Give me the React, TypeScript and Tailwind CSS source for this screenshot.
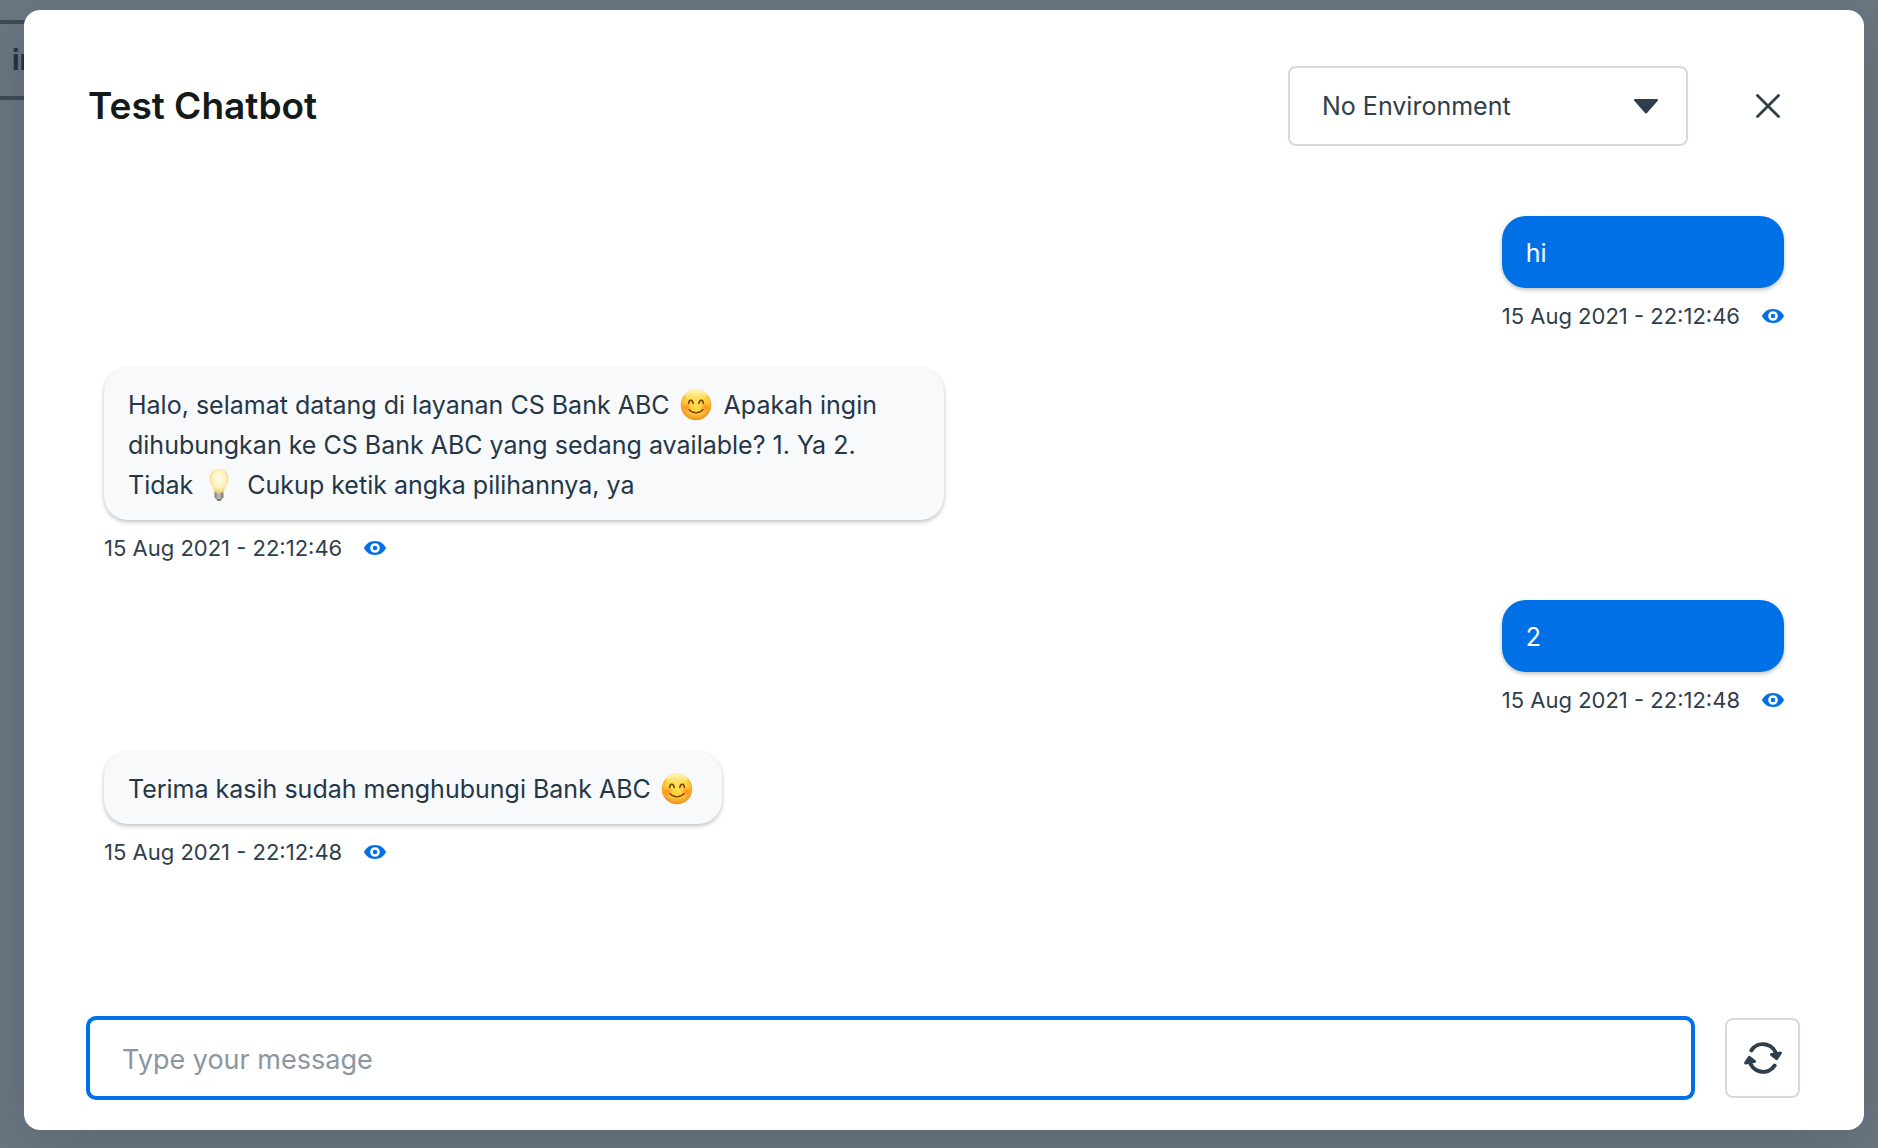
import React, { useState } from "react";

type Part = string | { emoji: "smile" | "bulb" };
type Message = { from: "user" | "bot"; parts: Part[]; time: string };

const messages: Message[] = [
  { from: "user", parts: ["hi"], time: "15 Aug 2021 - 22:12:46" },
  {
    from: "bot",
    parts: [
      "Halo, selamat datang di layanan CS Bank ABC ",
      { emoji: "smile" },
      " Apakah ingin dihubungkan ke CS Bank ABC yang sedang available? 1. Ya 2. Tidak ",
      { emoji: "bulb" },
      " Cukup ketik angka pilihannya, ya",
    ],
    time: "15 Aug 2021 - 22:12:46",
  },
  { from: "user", parts: ["2"], time: "15 Aug 2021 - 22:12:48" },
  {
    from: "bot",
    parts: ["Terima kasih sudah menghubungi Bank ABC ", { emoji: "smile" }],
    time: "15 Aug 2021 - 22:12:48",
  },
];

function Smile() {
  return (
    <svg role="img" aria-label="smiling face" viewBox="0 0 34 34" className="mr-1 ml-0.5 inline-block size-[34px] align-[-8px]">
      <defs>
        <radialGradient id="face" cx="50%" cy="40%" r="58%">
          <stop offset="0" stopColor="#ffe253" />
          <stop offset="0.65" stopColor="#fecb3a" />
          <stop offset="1" stopColor="#ee9220" />
        </radialGradient>
        <radialGradient id="cheek">
          <stop offset="0" stopColor="#ff7a1c" stopOpacity="0.8" />
          <stop offset="1" stopColor="#ff8a1c" stopOpacity="0" />
        </radialGradient>
        <linearGradient id="shine" x1="0" y1="0" x2="0" y2="1">
          <stop offset="0" stopColor="#fffbd0" />
          <stop offset="1" stopColor="#ffe860" stopOpacity="0" />
        </linearGradient>
      </defs>
      <circle cx="17" cy="17" r="15.3" fill="url(#face)" />
      <ellipse cx="17" cy="8" rx="11" ry="6" fill="url(#shine)" />
      <circle cx="7.5" cy="19.5" r="5.5" fill="url(#cheek)" />
      <circle cx="26.5" cy="19.5" r="5.5" fill="url(#cheek)" />
      <g fill="none" stroke="#7a3f08" strokeLinecap="round">
        <path d="M9.6 15.6c.3-4.6 4-4.6 4.6 0M19.8 15.6c.6-4.6 4.3-4.6 4.6 0" strokeWidth="1.5" />
        <path d="M10 21.6c3.6 4.3 10.4 4.3 14 0" strokeWidth="1.4" />
      </g>
    </svg>
  );
}

function Bulb() {
  return (
    <svg role="img" aria-label="light bulb" viewBox="0 0 34 34" className="mr-1 ml-0.5 inline-block size-[34px] align-[-8px]">
      <defs>
        <radialGradient id="glass" cx="50%" cy="42%" r="58%">
          <stop offset="0" stopColor="#fffef2" />
          <stop offset="0.6" stopColor="#fff3bd" />
          <stop offset="1" stopColor="#f0cc66" />
        </radialGradient>
        <linearGradient id="base" x1="0" y1="0" x2="1" y2="0">
          <stop offset="0" stopColor="#77746c" />
          <stop offset="0.45" stopColor="#d8d5cc" />
          <stop offset="1" stopColor="#77746c" />
        </linearGradient>
      </defs>
      <path d="M17 1c-5.6 0-9.5 4.2-9.5 9.5 0 5.5 4.3 8 4.8 14.5h9.4c.5-6.5 4.8-9 4.8-14.5C26.5 5.2 22.6 1 17 1z" fill="url(#glass)" />
      <path d="M12.6 24.6h8.8v5l-1.8 2h-5.2l-1.8-2z" fill="url(#base)" />
      <path d="M12.6 27h8.8M12.8 29.2h8.4" stroke="#8b887f" strokeWidth=".7" />
      <path d="M14.4 31.2h5.2l-1.4 1.6h-2.4z" fill="#444" />
    </svg>
  );
}

function EyeIcon() {
  return (
    <svg viewBox="0 0 22 14" className="h-[14px] w-[22px]" fill="#0070e6" aria-hidden="true">
      <path
        fillRule="evenodd"
        d="M11 0C5.8 0 1.9 2.8 0 7c1.9 4.2 5.8 7 11 7s9.1-2.8 11-7c-1.9-4.2-5.8-7-11-7zm0 2.2a4.8 4.8 0 1 1 0 9.6 4.8 4.8 0 0 1 0-9.6z"
      />
      <circle cx="11" cy="7" r="2.3" />
    </svg>
  );
}

function RefreshIcon() {
  return (
    <svg viewBox="0 0 38 32" className="h-8 w-[38px]" fill="none" stroke="#2f3e4b" strokeLinecap="round" strokeLinejoin="round" aria-hidden="true">
      <path d="M7.4 8.4A13.8 13.8 0 0 1 32.6 14M30.6 23.6A13.8 13.8 0 0 1 5.4 18" strokeWidth="4" />
      <path d="M27.6 12.6l5 3.9 3.6-5.5-3.8 1zM10.4 19.4l-5-3.9-3.6 5.5 3.8-1z" fill="#2f3e4b" strokeWidth="3.2" />
    </svg>
  );
}

function MessageItem({ message }: { message: Message }) {
  const user = message.from === "user";
  return (
    <li className={user ? "flex max-w-[840px] flex-col self-end" : "flex max-w-[840px] flex-col self-start"}>
      <p
        className={
          user
            ? "rounded-3xl bg-[#0070e6] px-6 pt-[17px] pb-[15px] text-[25px] leading-10 text-white shadow-[0_2px_4px_rgba(0,0,0,0.25)]"
            : "rounded-3xl bg-[#f7f9fb] px-6 pt-[17px] pb-[15px] text-[25px] leading-10 text-[#253746] shadow-[0_2px_4px_rgba(0,0,0,0.25)]"
        }
      >
        {message.parts.map((part, i) =>
          typeof part === "string" ? (
            <React.Fragment key={i}>{part}</React.Fragment>
          ) : part.emoji === "smile" ? (
            <Smile key={i} />
          ) : (
            <Bulb key={i} />
          ),
        )}
      </p>
      <div className="mt-4 flex h-6 items-center gap-[22px] text-[22px] leading-6 text-[#2f3e4b]">
        <time>{message.time}</time>
        <button type="button" aria-label="View details">
          <EyeIcon />
        </button>
      </div>
    </li>
  );
}

export default function App() {
  const [text, setText] = useState("");
  return (
    <div className="relative min-h-screen overflow-hidden bg-[#6b7782] font-['Inter','Liberation_Sans',sans-serif]">
      <div className="absolute top-5 left-0 flex h-20 w-40 items-center border-y-4 border-[#3d4a57] pl-3 text-[28px] font-bold text-[#253240]">
        intent
      </div>
      <div className="relative flex min-h-screen pt-[10px] pr-[14px] pb-[18px] pl-6">
        <section
          role="dialog"
          aria-label="Test Chatbot"
          className="flex flex-1 flex-col rounded-2xl bg-white pt-14 pb-[30px] shadow-[0_16px_64px_rgba(40,50,60,0.25)]"
        >
          <header className="flex items-center pr-20 pl-16">
            <h1 className="flex-1 text-[37px] font-semibold text-[#141a1a]">Test Chatbot</h1>
            <div className="relative w-[400px]">
              <select
                aria-label="Environment"
                className="h-20 w-full appearance-none rounded-lg border-2 border-[#d6dae0] bg-white px-8 pt-0.5 text-[25px] text-[#2f3e4b]"
              >
                <option>No Environment</option>
              </select>
              <svg viewBox="0 0 24 16" className="pointer-events-none absolute top-8 right-[30px] h-4 w-6" fill="#2f3e4b" stroke="#2f3e4b" strokeWidth="2" strokeLinejoin="round" aria-hidden="true">
                <path d="M1 2h22L12 14.5z" />
              </svg>
            </div>
            <button type="button" aria-label="Close" className="ml-16 flex size-8 items-center justify-center">
              <svg viewBox="0 0 24 24" className="size-6" fill="none" stroke="#2f3e4b" strokeWidth="2.8" strokeLinecap="round" aria-hidden="true">
                <path d="M1.5 1.5l21 21M22.5 1.5l-21 21" />
              </svg>
            </button>
          </header>
          <ul className="flex flex-1 flex-col gap-10 pt-[70px] pr-20 pl-20">
            {messages.map((m, i) => (
              <MessageItem key={i} message={m} />
            ))}
          </ul>
          <footer className="flex items-center gap-[30px] pr-16 pl-[62px]">
            <input
              type="text"
              aria-label="Message"
              placeholder="Type your message"
              value={text}
              onChange={(e) => setText(e.target.value)}
              className="h-21 min-w-0 flex-1 rounded-[10px] border-4 border-[#0070e6] bg-white px-8 pt-0.5 text-[27px] text-[#253746] outline-none placeholder:text-[#8b96a2]"
            />
            <button type="button" aria-label="Restart conversation" className="flex h-20 w-[75px] items-center justify-center rounded-lg border-2 border-[#d6dae0]">
              <RefreshIcon />
            </button>
          </footer>
        </section>
      </div>
    </div>
  );
}
